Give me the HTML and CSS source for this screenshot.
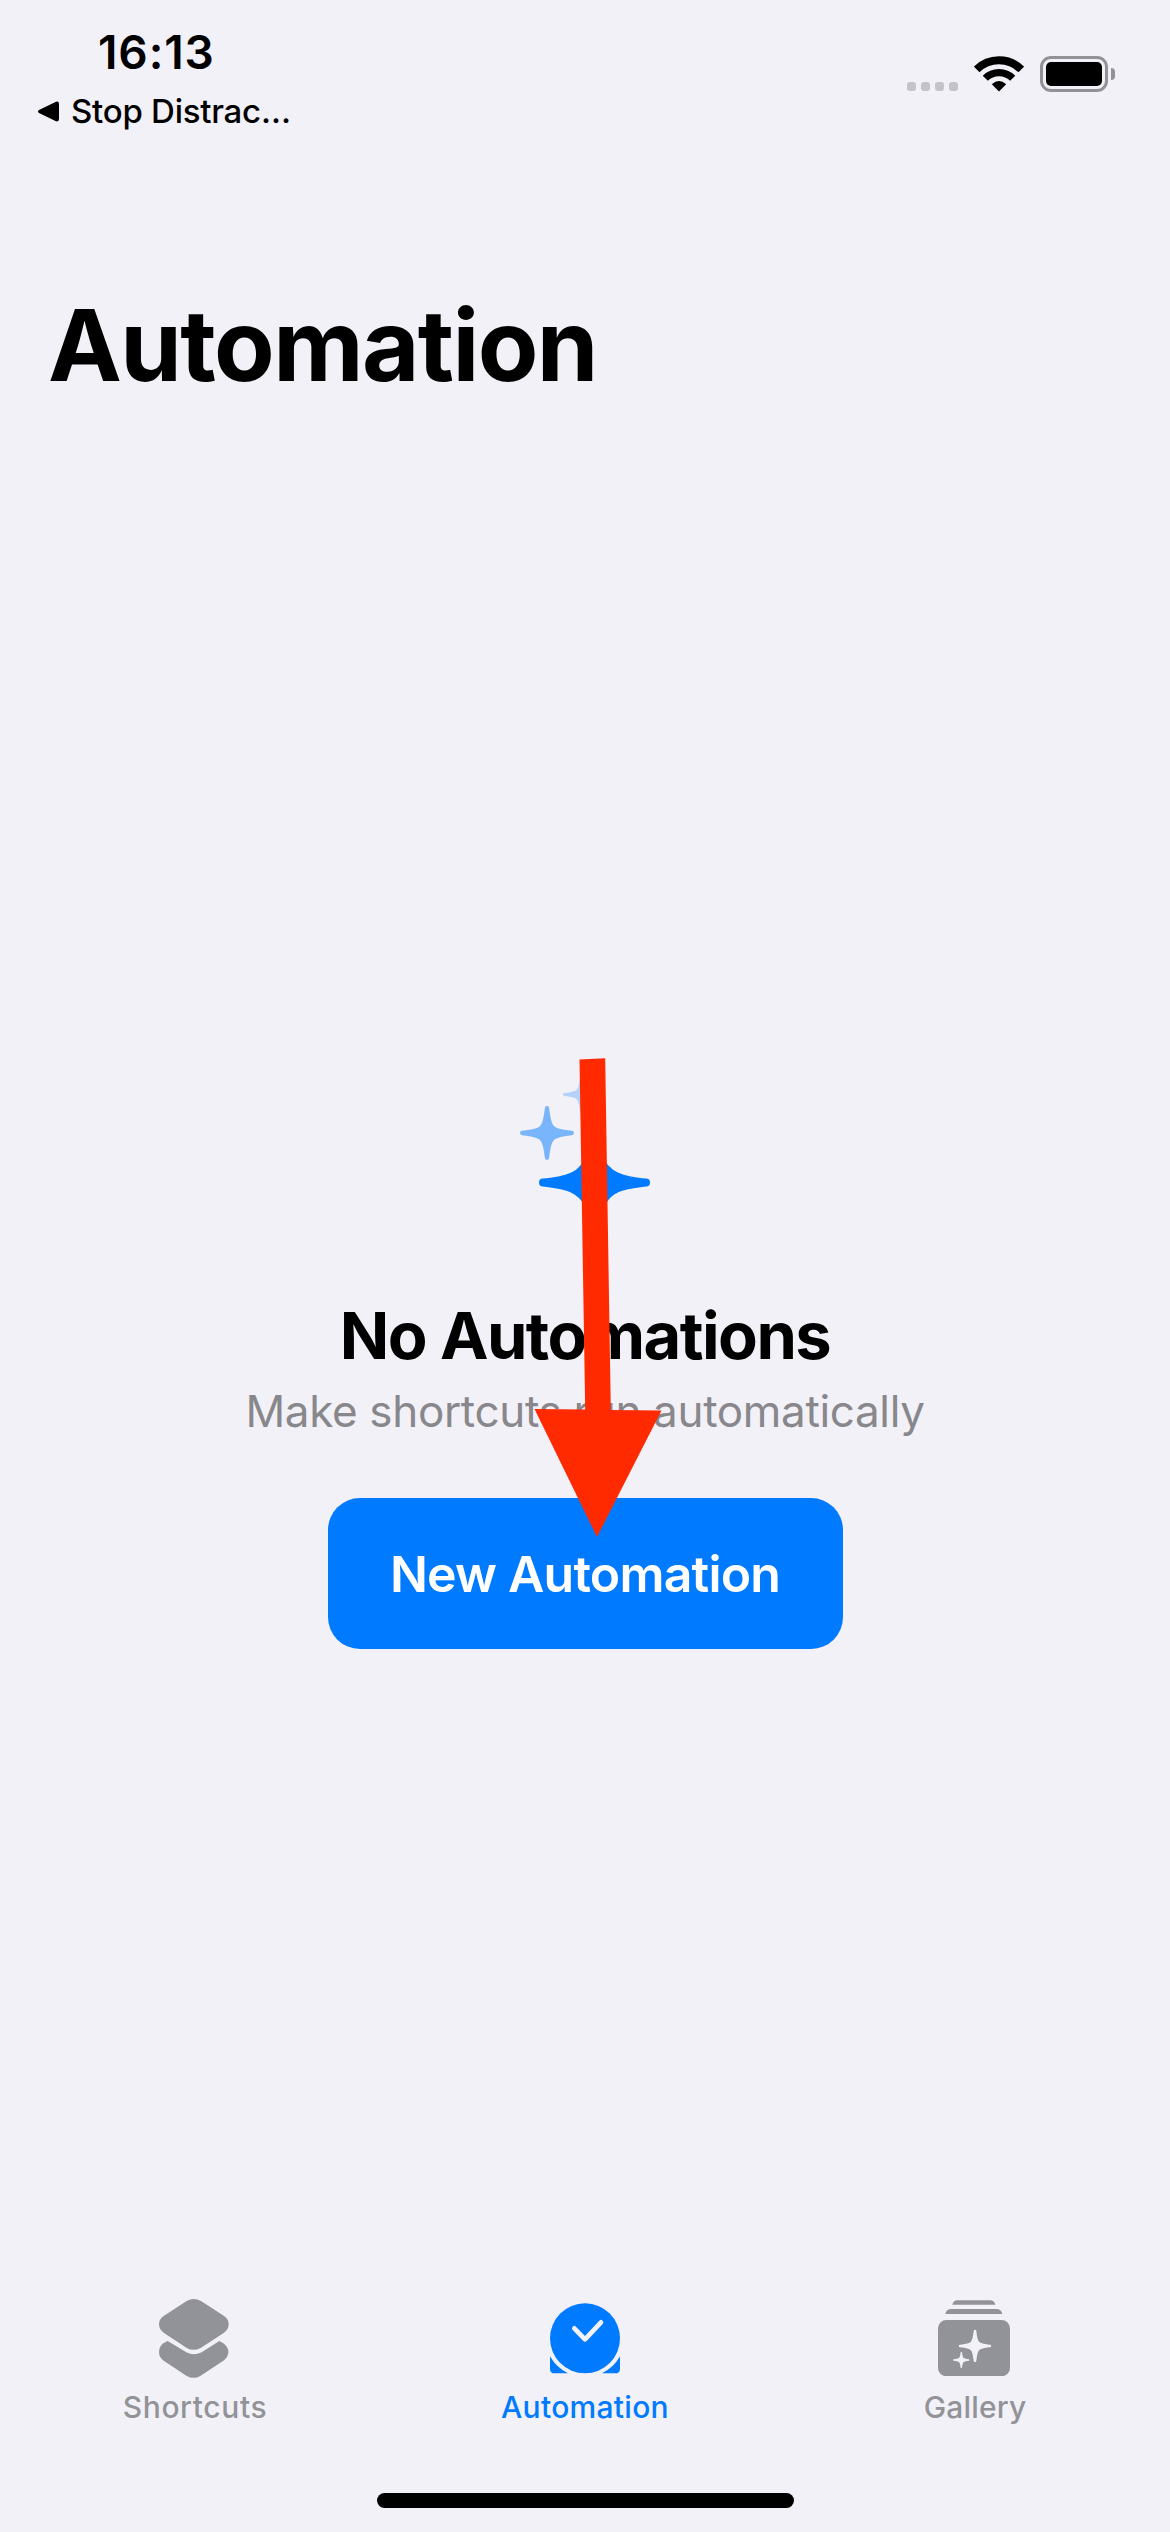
FILE: index.html
```html
<!DOCTYPE html>
<html lang="en">
<head>
<meta charset="utf-8">
<title>Automation</title>
<link rel="stylesheet" href="styles.css">
</head>
<body>
<svg class="defs" aria-hidden="true">
  <symbol id="sparkle" viewBox="-100 -100 200 200">
    <path d="M-92-8C-50-13-34-18-26-26S-13-50-8-92A8 8 0 0 1 8-92C13-50 18-34 26-26S50-13 92-8A8 8 0 0 1 92 8C50 13 34 18 26 26S13 50 8 92A8 8 0 0 1-8 92C-13 50-18 34-26 26S-50 13-92 8A8 8 0 0 1-92-8Z"/>
  </symbol>
  <symbol id="sparkle-wide" viewBox="-100 -100 200 200">
    <path d="M-93-7C-55-11-38-17-28-28S-12-55-7-93A7 7 0 0 1 7-93C12-55 17-39 28-28S55-11 93-7A7 7 0 0 1 93 7C55 11 38 17 28 28S12 55 7 93A7 7 0 0 1-7 93C-12 55-17 39-28 28S-55 11-93 7A7 7 0 0 1-93-7Z"/>
  </symbol>
</svg>
<div class="screen">
  <header class="status">
    <div class="status-left">
      <div class="time">16:13</div>
      <div class="back">
        <svg class="back-arrow" viewBox="0 0 21 21"><path d="M1 9Q-1 10.500 1 12L18 20.300Q21 21 21 18V3Q21 0 18 .7Z"/></svg>
        <span>Stop Distrac…</span>
      </div>
    </div>
    <div class="status-right">
      <div class="signal"><i></i><i></i><i></i><i></i></div>
      <svg class="wifi" viewBox="0 0 50 37">
        <g fill="none" stroke="#000">
          <path d="M2.700 14.500A31.800 31.800 0 0 1 47.300 14.500" stroke-width="8"/>
          <path d="M11.300 23.200A19.400 19.400 0 0 1 38.700 23.200" stroke-width="7.200"/>
        </g>
        <path d="M25 36.500L17.800 29.200Q25 22.600 32.200 29.200Z"/>
      </svg>
      <div class="battery"><div class="shell"><div class="charge"></div></div><div class="nub"></div></div>
    </div>
  </header>

  <h1 class="title"><span>Automation</span></h1>

  <main class="empty">
    <svg class="sparkles" viewBox="0 0 132 164" fill="#007aff">
      <use href="#sparkle" x="44" y="0" width="37" height="37" opacity=".25"/>
      <use href="#sparkle" x="1" y="30" width="54" height="54" opacity=".5"/>
      <use href="#sparkle-wide" x="20" y="51" width="111" height="111"/>
    </svg>
    <h2 class="heading">No Automations</h2>
    <p class="sub">Make shortcuts run automatically</p>
    <button class="new">New Automation</button>
    <svg class="pointer" viewBox="0 0 130 482" fill="#ff2a00">
      <path d="M45.500 2.500L71.200 1.300L76.800 353L127.500 353.500L63 480L.5 352L51.200 352.500Z"/>
    </svg>
  </main>

  <nav class="tabs">
    <div class="tab">
      <svg class="icon-shortcuts" viewBox="0 0 209 237">
        <path d="M83 6Q104-6 126 6L194 50Q209 60 209 76T194 102L126 146Q104 159 82 146L15 102Q0 92 0 76T15 50Z"/>
        <path d="M26 126L82 160Q104 172 128 160L181 126L193 133Q208 144 208 159T193 185L125 230Q104 243 82 230L14 185Q0 175 0 159T13 133Z"/>
      </svg>
      <span class="label shortcuts">Shortcuts</span>
    </div>
    <div class="tab active">
      <svg class="icon-automation" viewBox="0 0 210 212">
        <circle cx="105" cy="106" r="105"/>
        <path d="M0 160Q19 194 54 211H14Q0 211 0 197ZM210 160Q191 194 156 211H196Q210 211 210 197Z"/>
        <path class="check" d="M73 76L105 109L153 58"/>
      </svg>
      <span class="label automation">Automation</span>
    </div>
    <div class="tab">
      <svg class="icon-gallery" viewBox="0 0 216 229">
        <path d="M43 14Q46 1 59 1H156Q169 1 172 14ZM22 42Q25 27 40 27H175Q190 27 193 42Z"/>
        <rect y="60" width="216" height="169" rx="25"/>
        <g fill="#f2f1f7">
          <use href="#sparkle" x="62" y="89" width="98" height="98"/>
          <use href="#sparkle" x="45" y="155" width="50" height="50"/>
        </g>
      </svg>
      <span class="label gallery">Gallery</span>
    </div>
  </nav>
  <div class="home"></div>
</div>
</body>
</html>
```
FILE: styles.css
```css
* { box-sizing: border-box; margin: 0; padding: 0; }
body {
  background: #f2f1f7;
  color: #000;
  font-family: Inter, "Liberation Sans", sans-serif;
}
svg { display: block; }
.defs { position: absolute; width: 0; height: 0; }
.screen {
  width: 1170px;
  height: 2532px;
  display: flex;
  flex-direction: column;
  align-items: stretch;
  overflow: hidden;
}
.status {
  height: 285px;
  flex: none;
  display: flex;
  justify-content: space-between;
  padding: 24px 55px 0 38px;
}
.time {
  margin-left: 60px;
  font-size: 46px;
  font-weight: 600;
  line-height: 56px;
  letter-spacing: .9px;
}
.back {
  display: flex;
  align-items: center;
  gap: 12px;
  margin-top: 11px;
  font-size: 33px;
  font-weight: 500;
  line-height: 40px;
  letter-spacing: -.25px;
  white-space: nowrap;
}
.back-arrow { width: 21px; height: 21px; }
.status-right { display: flex; align-items: flex-end; height: 68px; }
.signal { display: flex; gap: 5px; margin: 0 16px 1px 0; }
.signal i { width: 9px; height: 9px; border-radius: 3px; background: #c4c3c9; }
.wifi { width: 50px; height: 37px; margin-right: 16px; }
.battery { display: flex; align-items: center; gap: 3px; }
.shell {
  width: 68px;
  height: 36px;
  padding: 3px;
  border: 3px solid #929196;
  border-radius: 11px;
}
.charge { height: 24px; border-radius: 5px; background: #000; }
.nub { width: 4px; height: 12px; border-radius: 0 4px 4px 0; background: #929196; }
.title {
  padding-left: 48px;
  font-size: 99px;
  font-weight: 700;
  line-height: 120px;
  letter-spacing: -1.6px;
}
.empty {
  position: relative;
  display: flex;
  flex-direction: column;
  align-items: center;
  height: 1893px;
  padding-top: 671px;
}
.sparkles { width: 132px; height: 164px; margin-bottom: 57px; }
.heading {
  font-size: 65px;
  font-weight: 700;
  line-height: 78px;
  letter-spacing: -1.55px;
  white-space: nowrap;
}
.sub {
  margin: 9px 0 60px;
  color: #88878c;
  font-size: 44px;
  line-height: 54px;
  letter-spacing: -.34px;
  white-space: nowrap;
}
.new {
  width: 515px;
  height: 151px;
  border: 0;
  border-radius: 32px;
  background: #007aff;
  color: #fff;
  font: 600 50px/60px Inter, "Liberation Sans", sans-serif;
  letter-spacing: -.8px;
  white-space: nowrap;
}
.pointer { position: absolute; left: 533.5px; top: 652px; width: 130px; height: 482px; }
.tabs { display: grid; grid-template-columns: repeat(3, 1fr); }
.tab {
  height: 127px;
  display: flex;
  flex-direction: column;
  align-items: center;
  justify-content: flex-end;
  color: #929398;
  fill: currentColor;
}
.tab.active { color: #007aff; }
.icon-shortcuts { width: 69.700px; height: 79px; margin: 0 2px 11px 0; }
.icon-automation { width: 70px; height: 70.700px; margin-bottom: 15px; }
.icon-gallery { width: 72px; height: 76.300px; margin: 0 2px 12.700px 0; }
.check { fill: none; stroke: #f2f1f7; stroke-width: 14; stroke-linecap: round; stroke-linejoin: round; }
.label { font-size: 30px; font-weight: 500; line-height: 36px; }
.shortcuts { letter-spacing: .6px; }
.automation { letter-spacing: .3px; }
.gallery { letter-spacing: .15px; }
.home {
  width: 417px;
  height: 15px;
  margin: 68px auto 0;
  border-radius: 8px;
  background: #000;
}
```
